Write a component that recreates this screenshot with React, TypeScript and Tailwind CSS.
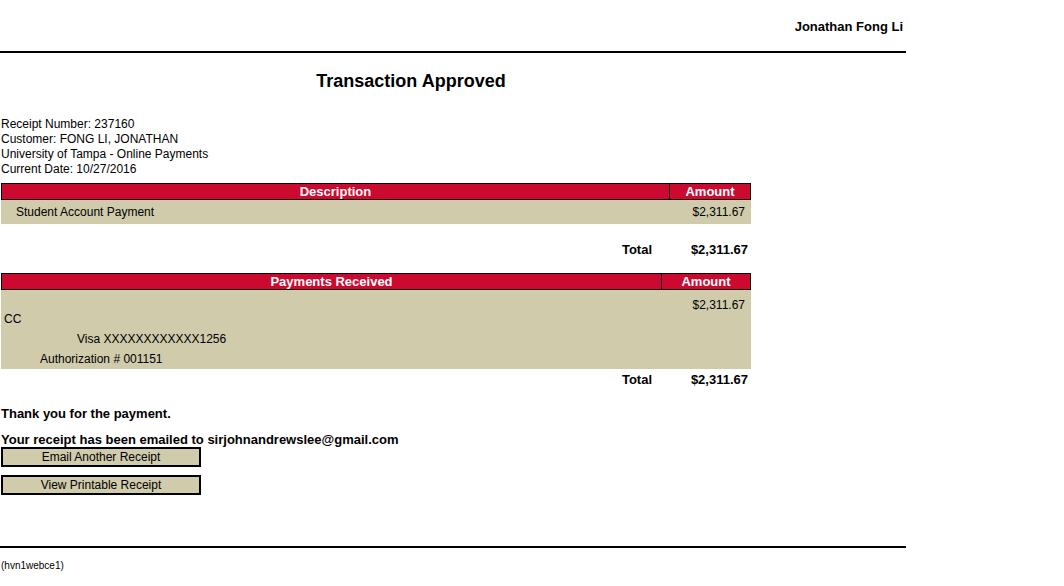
const red = "bg-[#cc0a2f]";
const tan = "bg-[#cfcbab]";

function HeadRow({ left, leftWidth }: { left: string; leftWidth: string }) {
  return (
    <div className={`flex h-[17px] border border-black ${red} text-white font-bold text-[13px] leading-[15px]`}>
      <div className={`${leftWidth} border-r border-black text-center`}>{left}</div>
      <div className="flex-1 text-center">Amount</div>
    </div>
  );
}

function TotalRow({ height, top }: { height: string; top: string }) {
  return (
    <div className={`flex ${height} ${top} font-bold text-[13px] leading-[15px]`}>
      <div className="w-[651px] text-right">Total</div>
      <div className="w-[96px] text-right">$2,311.67</div>
    </div>
  );
}

export default function App() {
  return (
    <div
      className="w-[1064px] h-[586px] bg-white text-black overflow-hidden"
      style={{ fontFamily: '"Liberation Sans", Arial, sans-serif' }}
    >
      <div className="w-[906px]">
        {/* header */}
        <div className="h-[51px] pt-[19px] pr-[3px] text-right font-bold text-[13px] leading-[15px]">
          Jonathan Fong Li
        </div>
        <div className="h-[2px] bg-black" />

        <h1 className="mt-[17px] w-[822px] text-center font-bold text-[18px] leading-[22px]">
          Transaction Approved
        </h1>

        <div className="mt-[25px] pl-[1px] text-[12px] leading-[15px]">
          <div>Receipt Number: 237160</div>
          <div>Customer: FONG LI, JONATHAN</div>
          <div>University of Tampa - Online Payments</div>
          <div>Current Date: 10/27/2016</div>
        </div>

        {/* description table */}
        <div className="mt-[5.5px] ml-[1px] w-[750px]">
          <HeadRow left="Description" leftWidth="w-[668px]" />
          <div className={`flex h-[24px] pt-[5px] ${tan} text-[12px] leading-[15px]`}>
            <div className="w-[669px] pl-[15px]">Student Account Payment</div>
            <div className="flex-1 text-right pr-[6px]">$2,311.67</div>
          </div>
          <TotalRow height="h-[49px]" top="pt-[18px]" />

          {/* payments table */}
          <HeadRow left="Payments Received" leftWidth="w-[660px]" />
          <div className={`flex h-[79px] ${tan} text-[12px] leading-[15px]`}>
            <div className="w-[661px] pt-[22px]">
              <div className="pl-[3px]">CC</div>
              <div className="pl-[76px] mt-[5px]">Visa XXXXXXXXXXXX1256</div>
              <div className="pl-[39px] mt-[5px]">Authorization # 001151</div>
            </div>
            <div className="flex-1 text-right pr-[6px] pt-[8px]">$2,311.67</div>
          </div>
          <TotalRow height="h-[20px]" top="pt-[3px]" />
        </div>

        <div className="mt-[17.5px] pl-[1px] font-bold text-[13px] leading-[15px]">
          Thank you for the payment.
        </div>
        <div className="mt-[11px] pl-[1px] font-bold text-[13px] leading-[15px]">
          Your receipt has been emailed to sirjohnandrewslee@gmail.com
        </div>

        <div className="ml-[1px] flex flex-col gap-[8px] w-[200px]">
          <button className={`h-[20px] border-2 border-black ${tan} text-[12px] leading-[14px]`}>
            Email Another Receipt
          </button>
          <button className={`h-[20px] border-2 border-black ${tan} text-[12px] leading-[14px]`}>
            View Printable Receipt
          </button>
        </div>

        <div className="mt-[51px] h-[2px] bg-black" />
        <div className="mt-[12px] pl-[1px] text-[10px] leading-[12px]">(hvn1webce1)</div>
      </div>
    </div>
  );
}
